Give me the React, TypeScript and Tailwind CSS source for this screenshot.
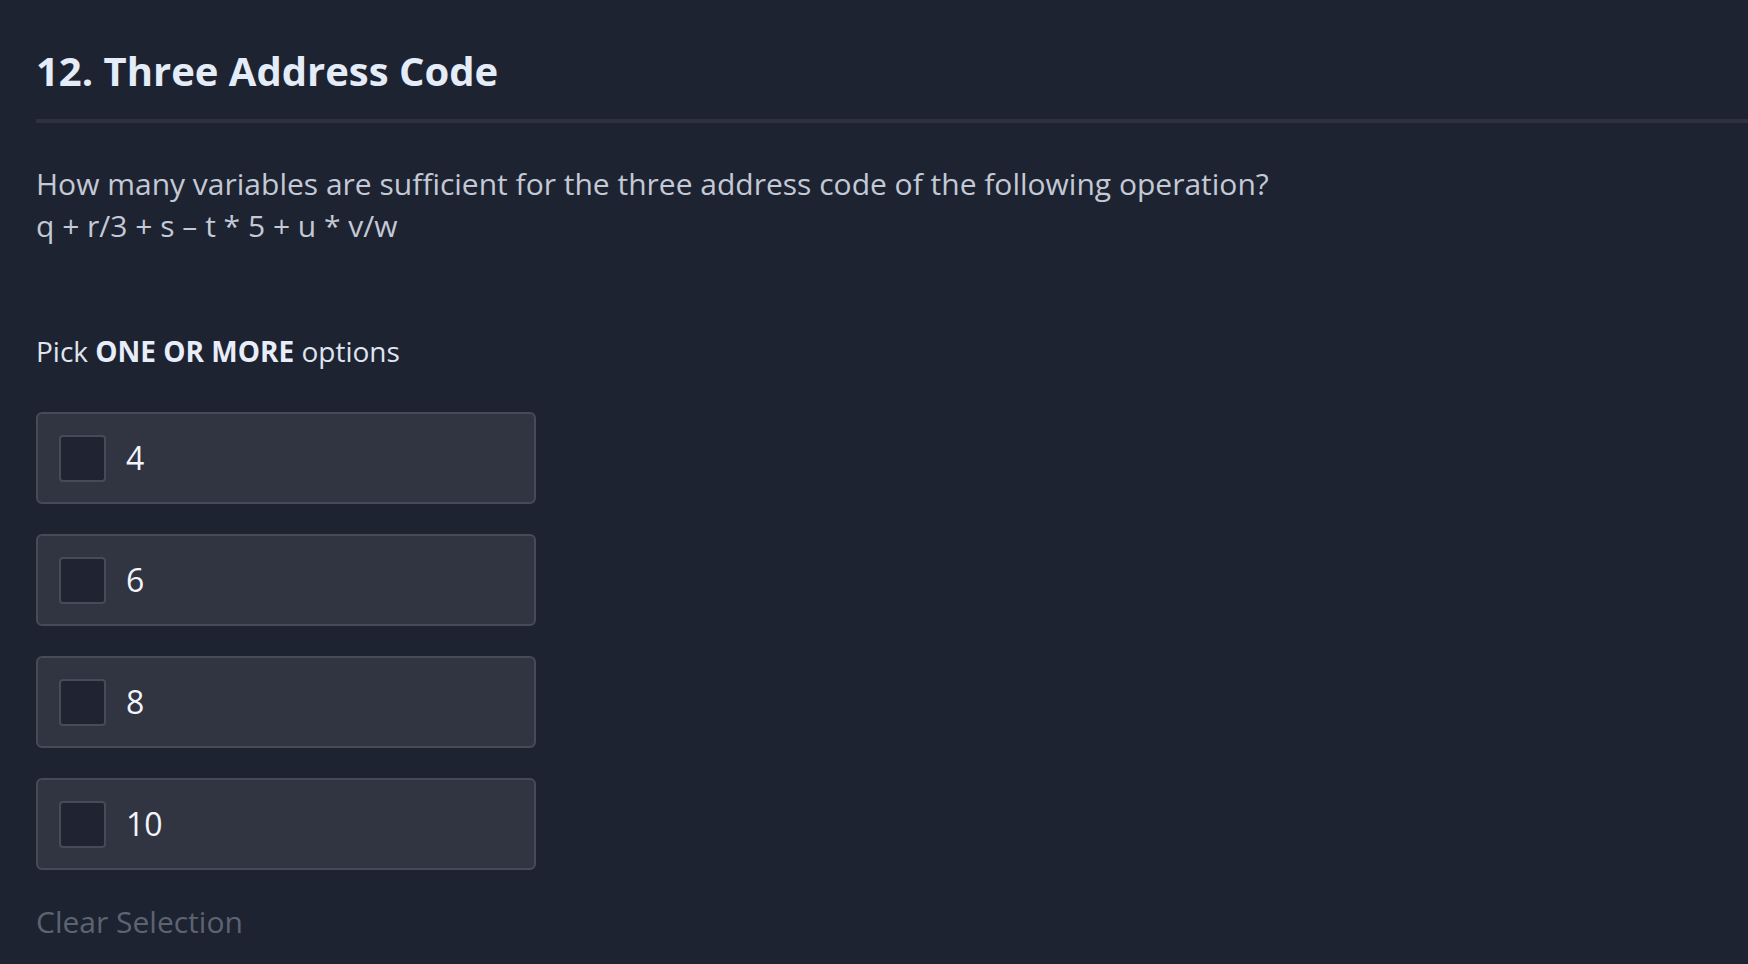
import React from "react";

const options = ["4", "6", "8", "10"];

export default function App() {
  return (
    <div
      className="min-h-[964px] w-full bg-[#1e2332] pl-[36px] pt-[47px]"
      style={{ fontFamily: '"Open Sans", "Noto Sans", sans-serif' }}
    >
      <h1 className="text-[40px] font-bold leading-[48px] text-[#e4ecf8]">
        12. Three Address Code
      </h1>
      <div className="mt-[24px] h-[4px] w-full bg-[#2d3140]" />
      <p className="mt-[40px] text-[30px] leading-[42px] text-[#c3c9d5]">
        How many variables are sufficient for the three address code of the following operation?
        <br />
        q + r/3 + s – t * 5 + u * v/w
      </p>
      <p className="mt-[83px] text-[28px] leading-[42px] text-[#dfe5ef]">
        Pick <span className="font-bold text-[#e8eef9]">ONE OR MORE</span> options
      </p>
      <div className="mt-[40px] flex flex-col gap-[30px]">
        {options.map((o) => (
          <label
            key={o}
            className="flex h-[92px] w-[500px] items-center gap-[20px] rounded-[6px] border-2 border-[#474b58] bg-[#313441] pl-[21px]"
          >
            <span className="h-[47px] w-[47px] rounded-[4px] border-2 border-[#474b58] bg-[#1f2332]" />
            <span className="text-[32px] leading-none text-[#f2f5fa]">{o}</span>
          </label>
        ))}
      </div>
      <div className="mt-[31px] text-[30px] leading-[42px] text-[#5d6371]">Clear Selection</div>
    </div>
  );
}
